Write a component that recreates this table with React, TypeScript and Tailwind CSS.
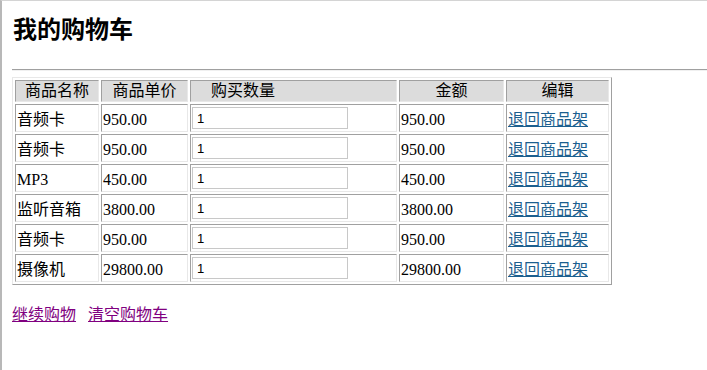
const items = [
  { name: "音频卡", price: "950.00", qty: 1 },
  { name: "音频卡", price: "950.00", qty: 1 },
  { name: "MP3", price: "450.00", qty: 1 },
  { name: "监听音箱", price: "3800.00", qty: 1 },
  { name: "音频卡", price: "950.00", qty: 1 },
  { name: "摄像机", price: "29800.00", qty: 1 },
];

const serif = "font-['Liberation_Serif','Noto_Sans_CJK_SC',serif]";

const cell =
  "border border-t-[#a0a0a0] border-l-[#a0a0a0] border-r-[#e8e8e8] border-b-[#e8e8e8] p-px align-middle";

// data cells sit their text a touch lower than the header row
const body = `${cell} pt-[4px] pb-0`;

const App = () => {
  return (
    <div
      className={`min-h-[370px] w-[707px] bg-white border-l-2 border-t border-l-[#b8b8b8] border-t-[#d4d4d4] ${serif} text-black text-[16px] leading-[18px]`}
    >
      <h2 className="pl-[11px] pt-[16px] text-[24px] leading-[26px] font-bold">我的购物车</h2>

      <hr className="ml-[10px] mt-[26px] border-t border-b border-t-[#a0a0a0] border-b-[#f0f0f0]" />

      <table
        className="ml-[10px] mt-[6px] w-[600px] border-separate border-spacing-[2px] border border-t-[#e8e8e8] border-l-[#e8e8e8] border-r-[#a0a0a0] border-b-[#a0a0a0]"
      >
        <thead>
          <tr className="h-[22px] bg-[#dcdcdc]">
            <th className={`${cell} w-[84px] font-normal text-center`}>商品名称</th>
            <th className={`${cell} w-[87px] font-normal text-center`}>商品单价</th>
            <th className={`${cell} w-[207px] font-normal text-left pl-[20px]`}>购买数量</th>
            <th className={`${cell} w-[105px] font-normal text-center`}>金额</th>
            <th className={`${cell} w-[103px] font-normal text-center`}>编辑</th>
          </tr>
        </thead>
        <tbody>
          {items.map((it, i) => (
            <tr key={i} className="h-[28px]">
              <td className={body}>{it.name}</td>
              <td className={body}>{it.price}</td>
              <td className={cell}>
                <input
                  type="text"
                  defaultValue={it.qty}
                  className="h-[22px] w-[156px] border border-[#c8c8c8] bg-white px-[4px] font-['Liberation_Sans',sans-serif] text-[13px] text-black outline-none"
                />
              </td>
              <td className={body}>{it.price}</td>
              <td className={body}>
                <a href="#" className="text-[#1b5f8f] underline">
                  退回商品架
                </a>
              </td>
            </tr>
          ))}
        </tbody>
      </table>

      <div className="ml-[10px] mt-[21px] flex gap-[12px]">
        <a href="#" className="text-[#800080] underline">
          继续购物
        </a>
        <a href="#" className="text-[#800080] underline">
          清空购物车
        </a>
      </div>
    </div>
  );
};

export default App;
